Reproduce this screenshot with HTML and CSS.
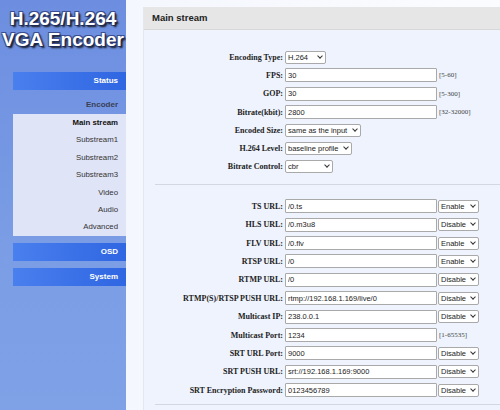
FILE: index.html
```html
<!DOCTYPE html>
<html lang="en">
<head>
  <meta charset="UTF-8" />
  <title>H.265/H.264 VGA Encoder</title>
  <link rel="stylesheet" href="styles.css">
</head>
<body>
  <div class="page">
    <div class="sidebar">
      <div class="logo">H.265/H.264<br>VGA Encoder</div>

      <div class="nav">
        <div class="nav-btn">Status</div>
        <div class="nav-title">Encoder</div>
        <div class="submenu">
          <div class="sub-item active">Main stream</div>
          <div class="sub-item">Substream1</div>
          <div class="sub-item">Substream2</div>
          <div class="sub-item">Substream3</div>
          <div class="sub-item">Video</div>
          <div class="sub-item">Audio</div>
          <div class="sub-item">Advanced</div>
        </div>
        <div class="nav-btn osd">OSD</div>
        <div class="nav-btn system">System</div>
      </div>
    </div>

    <div class="main">
      <div class="panel">
        <div class="panel-head">Main stream</div>
        <div class="panel-body">

          <div class="section first">
            <div class="row">
              <label>Encoding Type:</label>
              <span class="select sel-type"><select><option>H.264</option><option>H.265</option></select></span>
            </div>
            <div class="row">
              <label>FPS:</label>
              <input type="text" value="30">
              <span class="range">[5-60]</span>
            </div>
            <div class="row">
              <label>GOP:</label>
              <input type="text" value="30">
              <span class="range">[5-300]</span>
            </div>
            <div class="row">
              <label>Bitrate(kbit):</label>
              <input type="text" value="2800">
              <span class="range">[32-32000]</span>
            </div>
            <div class="row">
              <label>Encoded Size:</label>
              <span class="select sel-size"><select><option>same as the input</option></select></span>
            </div>
            <div class="row">
              <label>H.264 Level:</label>
              <span class="select sel-level"><select><option>baseline profile</option></select></span>
            </div>
            <div class="row">
              <label>Bitrate Control:</label>
              <span class="select sel-rc"><select><option>cbr</option><option>vbr</option></select></span>
            </div>
          </div>

          <div class="sep"></div>

          <div class="section second">
            <div class="row">
              <label>TS URL:</label>
              <input type="text" value="/0.ts">
              <span class="select sel-en"><select><option>Enable</option><option>Disable</option></select></span>
            </div>
            <div class="row">
              <label>HLS URL:</label>
              <input type="text" value="/0.m3u8">
              <span class="select sel-en"><select><option>Disable</option><option>Enable</option></select></span>
            </div>
            <div class="row">
              <label>FLV URL:</label>
              <input type="text" value="/0.flv">
              <span class="select sel-en"><select><option>Enable</option><option>Disable</option></select></span>
            </div>
            <div class="row">
              <label>RTSP URL:</label>
              <input type="text" value="/0">
              <span class="select sel-en"><select><option>Enable</option><option>Disable</option></select></span>
            </div>
            <div class="row">
              <label>RTMP URL:</label>
              <input type="text" value="/0">
              <span class="select sel-en"><select><option>Disable</option><option>Enable</option></select></span>
            </div>
            <div class="row">
              <label>RTMP(S)/RTSP PUSH URL:</label>
              <input type="text" value="rtmp://192.168.1.169/live/0">
              <span class="select sel-en"><select><option>Disable</option><option>Enable</option></select></span>
            </div>
            <div class="row">
              <label>Multicast IP:</label>
              <input type="text" value="238.0.0.1">
              <span class="select sel-en"><select><option>Disable</option><option>Enable</option></select></span>
            </div>
            <div class="row">
              <label>Multicast Port:</label>
              <input type="text" value="1234">
              <span class="range">[1-65535]</span>
            </div>
            <div class="row">
              <label>SRT URL Port:</label>
              <input type="text" value="9000">
              <span class="select sel-en"><select><option>Disable</option><option>Enable</option></select></span>
            </div>
            <div class="row">
              <label>SRT PUSH URL:</label>
              <input type="text" value="srt://192.168.1.169:9000">
              <span class="select sel-en"><select><option>Disable</option><option>Enable</option></select></span>
            </div>
            <div class="row">
              <label>SRT Encryption Password:</label>
              <input type="text" value="0123456789">
              <span class="select sel-en"><select><option>Disable</option><option>Enable</option></select></span>
            </div>
          </div>

          <div class="sep bottom"></div>
        </div>
      </div>
    </div>
  </div>
</body>
</html>
```

FILE: styles.css
```css
body {
  margin: 0;
  font-family: "Liberation Sans", Arial, sans-serif;
  background: #fff;
  overflow: hidden;
}

.page {
  display: flex;
  width: 500px;
  height: 410px;
  overflow: hidden;
}

/* left menu */
.sidebar {
  width: 126px;
  flex-shrink: 0;
  height: 410px;
  background: linear-gradient(to bottom, #6d8ee0, #7a9de5 60%, #7fa1e6);
}

.logo {
  padding-top: 8px;
  font-size: 19px;
  font-weight: bold;
  line-height: 21px;
  text-align: center;
  color: #fff;
  text-shadow: 1px 1px 0 #1d2a55, -1px -1px 0 #3b4f8f, 1px -1px 0 #3b4f8f, -1px 1px 0 #3b4f8f, 2px 2px 2px #111;
}

.nav {
  margin-top: 22px;
}

.nav-btn {
  height: 18px;
  margin-left: 13px;
  padding-right: 8px;
  line-height: 18px;
  text-align: right;
  font-size: 8px;
  font-weight: bold;
  color: #fff;
  background: linear-gradient(to right, #4a7fee, #2f66e2);
}

.nav-btn.osd,
.nav-btn.system {
  margin-top: 7px;
}

.nav-title {
  height: 24px;
  padding-top: 6px;
  box-sizing: border-box;
  padding-right: 8px;
  line-height: 18px;
  text-align: right;
  font-size: 8px;
  font-weight: bold;
  color: #3a3f55;
}

.submenu {
  margin-left: 13px;
  background: #e0e4f7;
}

.sub-item {
  height: 17.4px;
  line-height: 17.4px;
  padding-right: 8px;
  text-align: right;
  font-size: 7.8px;
  color: #333;
}

.sub-item.active {
  font-weight: bold;
  color: #111;
}

/* right content */
.main {
  flex: 1;
  display: flex;
  background: linear-gradient(to right, #f4f7fd, #fbfcff);
  padding-top: 7px;
  padding-left: 17px;
}

.panel {
  flex: 1;
  display: flex;
  flex-direction: column;
  border-left: 1px solid #e3e7ef;
}

.panel-head {
  height: 22px;
  line-height: 22px;
  padding-left: 8px;
  font-size: 9.5px;
  font-weight: bold;
  color: #222;
  background: #e6e6e6;
  border-bottom: 1px solid #d8d8d8;
}

.panel-body {
  flex: 1;
  background: #eef3fd;
  padding-top: 18px;
}

.row {
  display: flex;
  align-items: center;
  height: 18.3px;
}

.second .row {
  height: 18.4px;
}

.row label {
  width: 139px;
  margin-right: 2px;
  text-align: right;
  font-family: "Liberation Serif", "Times New Roman", serif;
  font-weight: bold;
  font-size: 8px;
  color: #222;
  white-space: nowrap;
}

.row input {
  width: 152px;
  height: 14px;
  box-sizing: border-box;
  margin: 0;
  padding: 0 2px;
  border: 1px solid #a9a9a9;
  border-radius: 1px;
  background: #fff;
  font-family: "Liberation Sans", Arial, sans-serif;
  font-size: 7.5px;
  color: #222;
}

.range {
  margin-left: 2px;
  font-family: "Liberation Serif", "Times New Roman", serif;
  font-size: 7px;
  color: #444;
}

/* select with drawn chevron */
.select {
  position: relative;
  display: block;
  height: 13px;
}

.select select {
  display: block;
  appearance: none;
  -webkit-appearance: none;
  width: 100%;
  height: 13px;
  box-sizing: border-box;
  margin: 0;
  padding: 0 9px 0 2px;
  border: 1px solid #a9a9a9;
  border-radius: 2px;
  background: #fff;
  font-family: "Liberation Sans", Arial, sans-serif;
  font-size: 7.5px;
  line-height: 11px;
  color: #222;
}

.select::after {
  content: "";
  position: absolute;
  right: 4px;
  top: 3px;
  width: 3px;
  height: 3px;
  border-right: 1px solid #333;
  border-bottom: 1px solid #333;
  transform: rotate(45deg);
  pointer-events: none;
}

.sel-type { width: 41px; }
.sel-size { width: 76px; }
.sel-level { width: 67px; }
.sel-rc { width: 48px; }

.sel-en {
  width: 41px;
  margin-left: 1px;
}

.sep {
  height: 1px;
  margin: 8px 0 12px 11px;
  background: #d3d7df;
}

.sep.bottom {
  margin-top: 5px;
}
```
